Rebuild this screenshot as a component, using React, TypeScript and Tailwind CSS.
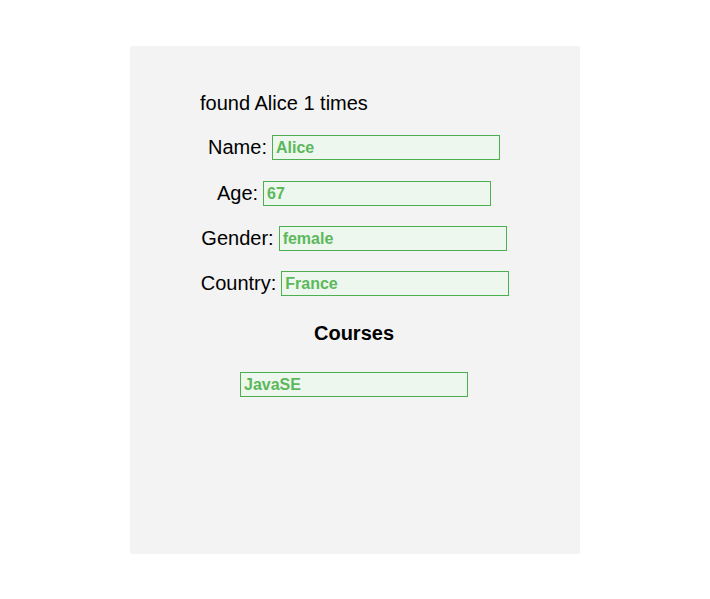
import React from 'react'

const fields = [
  { label: 'Name', value: 'Alice', cls: 'mt-0' },
  { label: 'Age', value: '67', cls: 'mt-[21px]' },
  { label: 'Gender', value: 'female', cls: 'mt-[20px]' },
  { label: 'Country', value: 'France', cls: 'mt-[20px] pl-[2px]' }
]

function Field({ value }: { value: string }) {
  return (
    <input
      readOnly
      value={value}
      className="w-[228px] h-[25px] px-[3px] border border-[#4caf50] bg-[#edf7ed] text-[#5cb85c] text-[16px] font-bold outline-none"
    />
  )
}

export default function App() {
  return (
    <div className="min-h-screen bg-white pt-[46px] font-['Liberation_Sans',Arial,sans-serif]">
      <div className="mx-auto w-[450px] h-[508px] bg-[#f3f3f3] rounded-[2px] pt-[46px] pr-[2px]">
        <p className="pl-[70px] text-[20px] leading-[23px] text-black">
          found Alice 1 times
        </p>
        <div className="mt-[20px] flex flex-col">
          {fields.map(f => (
            <div key={f.label} className={`${f.cls} flex items-center justify-center gap-[5px]`}>
              <span className="text-[20px] leading-[23px] text-black">{f.label}:</span>
              <Field value={f.value} />
            </div>
          ))}
        </div>
        <h2 className="mt-[26px] text-center text-[20px] leading-[23px] font-bold text-black">
          Courses
        </h2>
        <div className="mt-[27px] flex justify-center">
          <Field value="JavaSE" />
        </div>
      </div>
    </div>
  )
}
